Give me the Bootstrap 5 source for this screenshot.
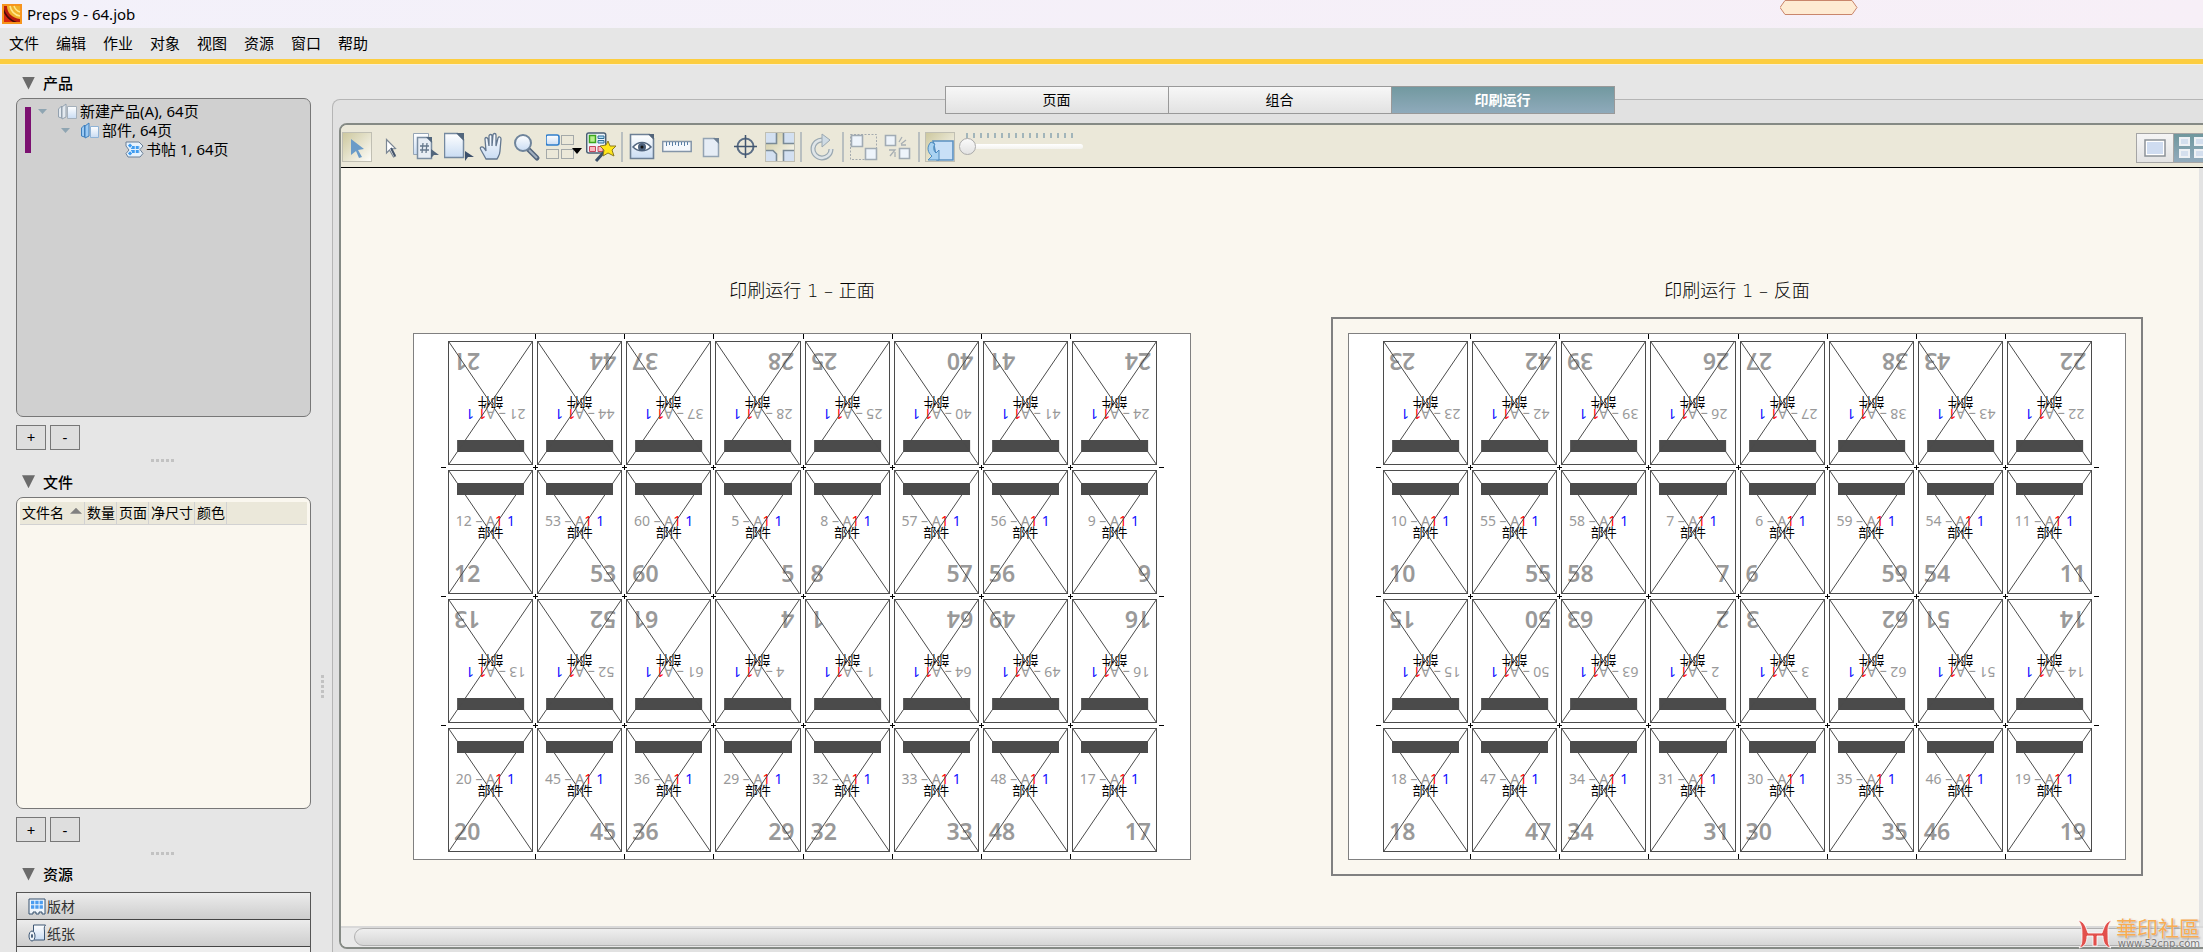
<!DOCTYPE html>
<html lang="zh-CN">
<head>
<meta charset="utf-8">
<meta name="viewport" content="width=device-width, initial-scale=1">
<title>Preps 9 - 64.job</title>
<link rel="stylesheet" href="https://cdn.jsdelivr.net/npm/bootstrap@5.3.0/dist/css/bootstrap.min.css">
<style>
body{font-family:"Noto Sans","Noto Sans CJK SC",sans-serif;font-size:15px;line-height:19px;color:#000;background:#e6e6e6}
button{font:inherit;color:inherit}
svg{display:block}
.titlebar{height:28px;padding-left:2px;background:linear-gradient(90deg,#f3f1fa,#f7eff7);gap:5px}
.title-hex{position:absolute;top:0;left:80.8%}
.menubar{height:31px;padding:0 9px;gap:17px}
.menubar a{color:#000;text-decoration:none;padding-bottom:1px}
.accent{height:6px;background:#fccd40;border-bottom:1px solid #f6efdc}
.sidebar{width:312px;padding:0 1px 0 16px}
.sec-head{height:25px;padding:0 0 5px 6px;gap:8px;font-size:15px;font-weight:500;line-height:20px;margin:0}
.sec-head.first{margin-top:8px}
.tri{width:13px;height:13px;background:#6b6b6b;clip-path:polygon(0 0,100% 0,50% 100%)}
.pane{border:1px solid #777;border-radius:7px;min-height:0;overflow:hidden}
.pane-tree{flex:322 1 0;background:#d0d0d0;padding:3px 8px}
.pane-files{flex:313 1 0;background:#faf7ef;padding:4px 3px}
.tree-mark{width:6px;height:46px;margin-top:5px;background:#7b1070}
.tree-row{height:19px;gap:2px}
.caret{width:9px;height:5px;margin-right:8px;background:#8fa5b2;clip-path:polygon(0 0,100% 0,50% 100%)}
.lv1{padding-left:7px}.lv2{padding-left:30px}.lv3{padding-left:94px}
.pm{width:30px;height:25px;padding:0;border:1px solid #777;background:#dedede;line-height:20px}
.grip{height:22px;padding-right:2px;gap:2px}
.grip i,.vgrip i{width:3px;height:3px;background:#c2c2c2}
.files{font-size:14px;line-height:20px;width:100%;background:#ebe8da;border-bottom:1px solid #d2d2d2}
.files th{font-weight:400;padding:1px 1px 1px 2px;border-right:1px solid #d2d2d2;white-space:nowrap}
.files th:last-child{width:100%;border:0}
.sort{display:inline-block;width:12px;height:6px;margin:0 1px 4px 6px;background:#808080;clip-path:polygon(50% 0,100% 100%,0 100%)}
.res{height:60px;margin-top:3px;border:1px solid #555;border-bottom:0;overflow:hidden;background:#eee}
.res button{height:27px;border:0;border-bottom:1px solid #444;background:linear-gradient(#ececec,#cdcdcd);font-size:14px;color:#333;padding:0 11px;gap:1px;text-align:left}
.vgrip{width:20px;gap:2px;padding-top:355px}
.work{margin-right:-25px;margin-top:34px;border:1px solid #b5b5b5;border-bottom:0;border-radius:8px 0 0 0;background:#e1e1e1;padding:0 6px 3px 6px}
.tabs{height:28px;margin-top:-14px;margin-bottom:9px}
.tabs button{width:224px;margin-left:-1px;border:1px solid #999;background:linear-gradient(#f7f7f7,#e2e2e2);font-size:14px;padding:0 0 2px}
.tabs button.active{background:linear-gradient(#7299a0,#8faabb);color:#fff;font-weight:700}
.stage{border:2px solid #858a85;border-radius:8px 0 0 8px;overflow:hidden;background:#faf7ef}
.tools{height:43px;padding:7px 7px 6px 1px;gap:4px;background:#ebe8d9;border-bottom:1px solid #000}
.tools .tool{width:30px;height:30px;padding:0;border:0;background:none}
.tools .tool.w36{width:36px}.tools .tool.w31{width:31px}
.tools .tool.on{background:linear-gradient(135deg,#cdc89f,#fdfcf8);border:1px solid #c0bfb3}
.rule{width:2px;height:30px;margin:0 1px;background:#b9bfc0}
.zoomer{width:124px}
.zoomer input{appearance:none;display:block;width:124px;height:17px;margin:0;background:none}
.zoomer input::-webkit-slider-runnable-track{height:5px;border-radius:3px;background:linear-gradient(#fff,#f3f2ee)}
.zoomer input::-webkit-slider-thumb{appearance:none;width:17px;height:17px;margin-top:-6px;border:1px solid #aaa;border-radius:50%;background:linear-gradient(#fafafa,#e2e2e2)}
.views{padding-top:3px}
.views button{width:38px;height:30px;padding:0;border:1px solid #a5a5a5;background:linear-gradient(#f5f5f5,#e3e3e3)}
.views button.active{background:linear-gradient(#6f979d,#92abbd);border-left:0}
.canvas{padding:111px 56px 0 55px;gap:123px}
.run{min-width:0}
.run h2{font-family:"DejaVu Sans","Noto Sans CJK SC",sans-serif;font-size:18px;line-height:24px;font-weight:300;margin:0 0 14px}
.frame{border:2px solid transparent;padding:14px 15px}
.frame.sel{border-color:#808080}
.sheet{background:#fff;border:1px solid #808080;padding:7px 33px 7px 34px;display:grid;grid-template-columns:repeat(8,1fr);gap:5px 4px}
.leaf{position:relative;height:124px;border:1px solid #4b4b4b;min-width:0}
.leaf>svg{position:absolute;inset:0;width:100%;height:100%;stroke:#4b4b4b}
.side{height:122px;overflow:hidden}
.turned{transform:rotate(180deg)}
.clampbar{position:relative;z-index:1;height:12px;margin:12px 8px 0;background:#4b4b4b}
.info{height:12px;margin-top:20px;font-size:14px;line-height:12px;color:#999}
.info span{width:46px;flex:none;text-align:right;white-space:nowrap}
.info b{font-weight:400;color:#f00}
.info em{font-style:normal;color:#11f;margin-left:4px}
.pname{height:12px;margin-top:-1px;font-size:13px;line-height:12px;text-align:center;font-family:"Noto Sans CJK SC",sans-serif}
.folio{height:24px;margin-top:23px;padding:0 5px;font-size:23px;line-height:24px;font-weight:600;color:#999}
.tick{position:absolute;background:#000}
.tick.v{width:1px;height:5px;right:-4px}
.tick.h{width:5px;height:1px;bottom:-4px}
.tick.t{top:-8px}.tick.b{bottom:-8px}
.tick.x{height:5px;bottom:-6px}
.tick.l{left:-8px}.tick.r{right:-8px}.tick.c{right:-6px}
.vbar{width:20px;background:#e3e3e3}
.hbar{height:21px;background:#e9e9e9;border-top:2px solid #d9d9d9;padding:0 30px 1px 13px}
.thumb{height:18px;border:1px solid #b0b0b0;border-radius:9px;background:linear-gradient(#efefef,#d6d6d6)}
.stamp{position:absolute;right:3px;bottom:2px;gap:3px;color:#777}
.stamp strong{font-family:"Noto Sans CJK TC",sans-serif;font-size:21px;line-height:22px;font-weight:400;color:#f8ac52;text-shadow:0 0 2px #fff,1px 1px 2px #888}
.stamp small{font-size:10px;line-height:12px;font-family:"DejaVu Sans",sans-serif;text-shadow:0 0 2px #fff}
</style>
</head>
<body class="vh-100 d-flex flex-column overflow-hidden position-relative">
<svg width="0" height="0" class="position-absolute" aria-hidden="true"><defs>
<linearGradient id="gb" x1="0" y1="0" x2="0" y2="1"><stop offset="0" stop-color="#fff"/><stop offset="1" stop-color="#c9dcf3"/></linearGradient>
</defs></svg>

<header class="titlebar d-flex align-items-center flex-shrink-0">
<svg width="20" height="20" viewBox="0 0 20 20"><rect width="20" height="20" fill="#f7941d"/><rect x="2" y="2" width="16" height="16" fill="#b81c0e"/><path d="M5 2h13v13C10 14 5 9 5 2z" fill="#f0b02a"/><path d="M8 2c1 5 5 9 10 10M12 2c1 3 3 5 6 6" stroke="#ffe88c" fill="none" stroke-width="1.500"/><path d="M2 5c2 6 7 11 13 13H2z" fill="#4a0d08"/><path d="M2 9c2 4 5 7 9 9H2z" fill="#d8290f"/></svg>
<span>Preps 9 - 64.job</span>
</header>
<svg class="title-hex" width="78" height="15" viewBox="0 0 78 15"><path d="M5 .5h67l5 7-5 7H5l-5-7z" fill="#feebd3" stroke="#c9866c"/></svg>
<nav class="menubar d-flex align-items-center flex-shrink-0">
<a href="#">文件</a><a href="#">编辑</a><a href="#">作业</a><a href="#">对象</a><a href="#">视图</a><a href="#">资源</a><a href="#">窗口</a><a href="#">帮助</a>
</nav>
<div class="accent flex-shrink-0"></div>

<div class="d-flex flex-grow-1" style="min-height:0">
<aside class="sidebar d-flex flex-column flex-shrink-0">
<h2 class="sec-head first d-flex align-items-center"><i class="tri"></i>产品</h2>
<section class="pane pane-tree d-flex align-items-start">
<div class="tree-mark"></div>
<div>
<div class="tree-row lv1 d-flex align-items-center"><i class="caret"></i>
<svg width="21" height="18" viewBox="0 0 21 18"><path d="M1.500 6l3-3v12l-3-1zM5 4l4-3v13l-4 2z" fill="#e3e9ef" stroke="#93a1af"/><path d="M10.500 3.500h9v12h-9z" fill="url(#gb)" stroke="#a5b0bb"/></svg><span>新建产品(A), 64页</span></div>
<div class="tree-row lv2 d-flex align-items-center"><i class="caret"></i>
<svg width="20" height="18" viewBox="0 0 20 18"><path d="M1.500 6l3-3v12l-3-1zM5 4l4-3v13l-4 2z" fill="#9ccaf3" stroke="#3e7fbd"/><path d="M10.500 4.500h8v11h-8z" fill="url(#gb)" stroke="#8fb3d6"/></svg><span>部件, 64页</span></div>
<div class="tree-row lv3 d-flex align-items-center">
<svg width="19" height="17" viewBox="0 0 19 17"><path d="M1 1h13l4 4-3 3.500 3 4-3 3.500H3l-2-3.500L4 9 1 5z" fill="#e6f2fd" stroke="#6b7f95"/><path d="M4 3.500l3 3h8M4 13.500l3-3h8" fill="none" stroke="#3f9cf0" stroke-width="3" stroke-dasharray="3 1"/></svg><span>书帖 1, 64页</span></div>
</div>
</section>
<div class="d-flex gap-1 mt-1 pt-1 flex-shrink-0"><button class="pm">+</button><button class="pm">-</button></div>
<div class="grip d-flex align-items-center justify-content-center flex-shrink-0"><i></i><i></i><i></i><i></i><i></i></div>
<h2 class="sec-head d-flex align-items-center flex-shrink-0"><i class="tri"></i>文件</h2>
<section class="pane pane-files">
<table class="files"><thead><tr><th>文件名<i class="sort"></i></th><th>数量</th><th>页面</th><th>净尺寸</th><th>颜色</th><th></th></tr></thead></table>
</section>
<div class="d-flex gap-1 mt-1 pt-1 flex-shrink-0"><button class="pm">+</button><button class="pm">-</button></div>
<div class="grip d-flex align-items-center justify-content-center flex-shrink-0"><i></i><i></i><i></i><i></i><i></i></div>
<h2 class="sec-head d-flex align-items-center flex-shrink-0"><i class="tri"></i>资源</h2>
<div class="res d-flex flex-column flex-shrink-0">
<button class="d-flex align-items-center flex-shrink-0"><svg width="18" height="17" viewBox="0 0 18 17"><path d="M1 1h16v15h-3v-2h-3v2H8v-2H5v2H1z" fill="#f2f7fc" stroke="#34506e"/><path d="M3 4.500h12M3 9h12" stroke="#4c9df0" stroke-width="3.500" stroke-dasharray="3.300 1"/></svg>版材</button>
<button class="d-flex align-items-center flex-shrink-0"><svg width="18" height="18" viewBox="0 0 18 18"><path d="M5.500 1h12c-2 2-1 4-1 7v8h-11z" fill="url(#gb)" stroke="#3c5674"/><ellipse cx="4" cy="12" rx="3" ry="5" fill="#eef3f8" stroke="#3c5674"/><ellipse cx="4" cy="12" rx="1" ry="2" fill="#3c5674"/></svg>纸张</button>
</div>
</aside>
<div class="vgrip d-flex flex-column align-items-center justify-content-center flex-shrink-0"><i></i><i></i><i></i><i></i><i></i></div>

<main class="work flex-grow-1 d-flex flex-column" style="min-width:0">
<div class="tabs d-flex justify-content-center flex-shrink-0"><button>页面</button><button>组合</button><button class="active">印刷运行</button></div>
<div class="stage flex-grow-1 d-flex flex-column" style="min-height:0">
<div class="tools d-flex align-items-center flex-shrink-0">
<button class="tool on" aria-label="选择"><svg width="28" height="28" viewBox="0 0 28 28"><path d="M8 6l13 10-6 1 4 7-3 1-3-7-5 4z" fill="#6a9bc8"/></svg></button>
<button class="tool" aria-label="直接选择"><svg width="30" height="30" viewBox="0 0 30 30"><path d="M10.500 7.500l9 9-4 .5 4 7-2 1-4-7-3 3z" fill="#fff" stroke="#7b8794" stroke-width="1.200"/><path d="M15 16l4 8" stroke="#44546a" stroke-width="2"/></svg></button>
<button class="tool" aria-label="编号"><svg width="30" height="30" viewBox="0 0 30 30"><path d="M3.500 1.500h15v21h-15z" fill="url(#gb)" stroke="#96a5b5"/><path d="M7.500 5.500h10l4 4v17h-14z" fill="#e7edf4" stroke="#7b8ea2" stroke-width="1.500"/><path d="M16 5h6v6z" fill="#52667c"/><path d="M13 11l-1 10M17 11l-1 10M10 14h9M10 18h9" stroke="#66788c" stroke-width="1.300"/><path d="M21 17v9l3-3 5 0z" fill="#52667c"/></svg></button>
<button class="tool" aria-label="页面选择"><svg width="30" height="30" viewBox="0 0 30 30"><path d="M.5 1.500h13l6 6v18H.500z" fill="url(#gb)" stroke="#7489a0" stroke-width="1.500"/><path d="M12 1h8v8z" fill="#52667c"/><path d="M21 19v10l3-4 6 0z" fill="#3c506b"/></svg></button>
<button class="tool" aria-label="移动"><svg width="30" height="30" viewBox="0 0 30 30"><path d="M8 27l-5-9c-2-3 1-4 3-2l2 3L7 7c0-2 2-2 3 0l1 7V4c0-2 3-2 3 0v10l1-11c0-2 3-2 3 0v11l2-8c1-2 3-1 3 1l-1 12c0 4-2 6-3 8z" fill="url(#gb)" stroke="#63778f" stroke-width="1.300"/></svg></button>
<button class="tool" aria-label="缩放"><svg width="30" height="30" viewBox="0 0 30 30"><path d="M16 17l9 9" stroke="#53657c" stroke-width="5" stroke-linecap="round"/><path d="M17 18l8 8" stroke="#a2b0c0" stroke-width="2"/><circle cx="11" cy="11" r="8" fill="url(#gb)" stroke="#6f849b" stroke-width="2"/></svg></button>
<button class="tool w36" aria-label="布局"><svg width="36" height="30" viewBox="0 0 36 30"><rect x="0" y="3" width="13" height="10" rx="2" fill="url(#gb)" stroke="#2f7dcb" stroke-width="1.600"/><path d="M15.500 3.500h12v9h-12zM.5 17.500h12v9H.500zM15.500 17.500h12v9h-12z" fill="none" stroke="#5d6b78" stroke-dasharray="1 1"/><path d="M26 16h10l-5 6z"/></svg></button>
<button class="tool" aria-label="自动"><svg width="30" height="30" viewBox="0 0 30 30"><rect x=".7" y="1" width="19" height="20" rx="2" fill="#eef4fa" stroke="#4b5f74" stroke-width="1.500"/><path d="M3.500 3.500h6v7h-6z" fill="#b6f08b" stroke="#3aa51c" stroke-width="1.500"/><path d="M12 4h6v2.500h-6zM12 8.500h6v2.500h-6z" fill="#b5dcf5" stroke="#2f6f97"/><path d="M3.500 14.500h6v5h-6zM12 14.500h5v5h-5z" fill="#f9b8c0" stroke="#c5475a"/><path d="M10 29l9-10" stroke="#3a5069" stroke-width="3"/><path d="M22 9l2 5 6 0-4 4 2 6-6-3-5 3 1-6-4-4 6-1z" fill="#ffe619" stroke="#8a7a20"/></svg></button>
<span class="rule"></span>
<button class="tool" aria-label="预览"><svg width="30" height="30" viewBox="0 0 30 30"><path d="M2.500 2.500h19l4 4v20h-23z" fill="url(#gb)" stroke="#6d8096" stroke-width="1.600"/><path d="M20 2h6v6z" fill="#53657a"/><path d="M5 15c5-6 13-6 18 0-5 5-13 5-18 0z" fill="#fff" stroke="#52667f" stroke-width="1.500"/><circle cx="14" cy="15" r="4" fill="#4c617c"/><circle cx="14" cy="15" r="1.500" fill="#111"/></svg></button>
<button class="tool" aria-label="标尺"><svg width="30" height="30" viewBox="0 0 30 30"><path d="M.7 9.500h28.500v10H.700z" fill="#f5f8fc" stroke="#8495a8" stroke-width="1.500"/><path d="M4.500 10v4M7.500 10v3M10.500 10v4M13.500 10v3M16.500 10v4M19.500 10v3M22.500 10v4M25.500 10v3" stroke="#5a7fa5"/></svg></button>
<button class="tool w31" aria-label="页面"><svg width="31" height="30" viewBox="0 0 31 30"><path d="M7.500 6.500h11l4 4v14h-15z" fill="#e6edf6" stroke="#93a3b3" stroke-width="1.500"/><path d="M17 6h6v6z" fill="#6d7f92"/></svg></button>
<button class="tool" aria-label="标记"><svg width="30" height="30" viewBox="0 0 30 30"><circle cx="14.500" cy="14.500" r="8" fill="none" stroke="#5a6d85" stroke-width="2"/><path d="M14.500 3v23M3 14.500h23" stroke="#42566f" stroke-width="1.500"/></svg></button>
<button class="tool on" aria-label="裁切标记"><svg width="28" height="28" viewBox="0 0 28 28"><path d="M0 0h10v10H0zM18 0h10v10H18zM0 18h8l3 3v7H0zM18 18h10v10H18z" fill="#d3e0f1"/><path d="M0 10.500h10.500V0M28 10.500H17.500V0M0 17.500h7l3.500 3.500v7M28 17.500H17.500V28" fill="none" stroke="#7a8a96" stroke-width="1.600"/></svg></button>
<span class="rule"></span>
<button class="tool" aria-label="旋转"><svg width="30" height="30" viewBox="0 0 30 30"><path d="M16 8a9 9 0 1 0 8 9" fill="none" stroke="#9aa8b1" stroke-width="5"/><path d="M16 8a9 9 0 1 0 8 9" fill="none" stroke="#dfe5e8" stroke-width="2.500"/><path d="M15 2l8 6-8 7z" fill="#cfdbe4" stroke="#9aa8b1"/></svg></button>
<span class="rule"></span>
<button class="tool" aria-label="组合"><svg width="30" height="30" viewBox="0 0 30 30"><path d="M1.500 2.500h26v25h-26z" fill="none" stroke="#a4aaae" stroke-dasharray="2 1.500"/><path d="M2.500 3.500h11v11h-11zM16.500 16.500h11v11h-11z" fill="#eef4fb" stroke="#a1abb4" stroke-width="1.600"/></svg></button>
<button class="tool" aria-label="取消组合"><svg width="30" height="30" viewBox="0 0 30 30"><path d="M2.500 3.500h10v10h-10zM16.500 16.500h10v10h-10z" fill="#eef4fb" stroke="#a1abb4" stroke-width="1.600"/><path d="M16 10l3-5M18 12l5-4M18 13h5M6 18h6l-5 6M12 20v5" stroke="#a8afb3" fill="none" stroke-width="1.300"/></svg></button>
<span class="rule"></span>
<button class="tool on" aria-label="翻转"><svg width="28" height="28" viewBox="0 0 28 28"><path d="M7 8h20v19H11z" fill="#c9e0f7" stroke="#5b90c1" stroke-width="1.600"/><path d="M5 9c-5 5-3 11 1 14l-4 4h11V17l-3 3c-3-3-3-6-1-9z" fill="#a9d2f1" stroke="#4c8cc0"/></svg></button>
<div class="zoomer align-self-start"><svg width="124" height="6" viewBox="0 0 124 6"><path id="ticks" stroke="#8aa5af" stroke-width="1.500"/></svg><input type="range" min="0" max="15" value="0" aria-label="缩放比例"></div>
<div class="views d-flex ms-auto"><button aria-label="单页视图"><svg class="m-auto" width="22" height="18" viewBox="0 0 22 18"><path d="M1 1h20v16H1z" fill="#fff" stroke="#8c9298" stroke-width="1.500"/><path d="M3 3h16v12H3z" fill="#cfdcf0"/></svg></button><button class="active" aria-label="多页视图"><svg class="m-auto" width="28" height="22" viewBox="0 0 28 22"><path d="M1 1h9v7H1zM16 1h9v7h-9zM1 13h9v7H1zM16 13h9v7h-9z" fill="#d4dfee" stroke="#eef1f5" stroke-width="2"/></svg></button></div>
</div>
<div class="d-flex flex-grow-1" style="min-height:0">
<div class="canvas d-flex flex-grow-1 align-items-start overflow-hidden">
<section class="run flex-fill w-50 text-center"><h2>印刷运行 1 – 正面</h2><div class="frame"><div class="sheet text-start" data-pages="21 44 37 28 25 40 41 24 12 53 60 5 8 57 56 9 13 52 61 4 1 64 49 16 20 45 36 29 32 33 48 17"></div></div></section>
<section class="run flex-fill w-50 text-center"><h2>印刷运行 1 – 反面</h2><div class="frame sel"><div class="sheet text-start" data-pages="23 42 39 26 27 38 43 22 10 55 58 7 6 59 54 11 15 50 63 2 3 62 51 14 18 47 34 31 30 35 46 19"></div></div></section>
</div>
<div class="vbar flex-shrink-0"></div>
</div>
<div class="hbar flex-shrink-0"><div class="thumb"></div></div>
</div>
</main>
</div>

<div class="stamp d-flex align-items-end">
<svg width="36" height="32" viewBox="0 0 36 32"><path d="M1 2c7 2 8 8 10 13h14c2-5 3-11 10-13-5 5-4 10-4 16 0 5 0 9 3 12-6-1-8-6-8-12h-6v10h-4V18h-6c0 6-2 11-8 12 3-3 3-7 3-12C5 11 5 7 1 2z" fill="#e2504c" stroke="#fff" stroke-width=".8"/></svg>
<div class="d-flex flex-column align-items-end"><strong>華印社區</strong><small>www.52cnp.com</small></div>
</div>

<script src="https://cdn.jsdelivr.net/npm/bootstrap@5.3.0/dist/js/bootstrap.bundle.min.js"></script>
<script>
// Fill each press sheet: four rows of eight leaves, odd rows head-down.
const COLS = 8, ROWS = 4;
document.querySelectorAll('.sheet').forEach(sheet => {
  sheet.innerHTML = sheet.dataset.pages.split(' ').map((page, i) => {
    const col = i % COLS, row = Math.floor(i / COLS), turned = row % 2 === 0;
    const alignEnd = (col % 2 === 1) !== turned;
    let marks = '';
    if (col < COLS - 1) {
      if (row === 0) marks += '<i class="tick v t"></i>';
      marks += row === ROWS - 1 ? '<i class="tick v b"></i>' : '<i class="tick v x"></i><i class="tick h c"></i>';
    }
    if (row < ROWS - 1) {
      if (col === 0) marks += '<i class="tick h l"></i>';
      if (col === COLS - 1) marks += '<i class="tick h r"></i>';
    }
    return `<div class="leaf"><div class="side ${turned ? 'turned' : ''}">
      <div class="clampbar"></div>
      <div class="info d-flex"><span>${page} – A</span><b>1</b><em>1</em></div>
      <div class="pname">部件</div>
      <div class="folio ${alignEnd ? 'text-end' : ''}">${page}</div></div>
      <svg viewBox="0 0 100 100" preserveAspectRatio="none"><path d="M0 0L100 100M100 0L0 100" vector-effect="non-scaling-stroke"/></svg>${marks}</div>`;
  }).join('');
});
// Scale marks above the zoom slider
document.getElementById('ticks').setAttribute('d', Array.from({length: 16}, (_, i) => `M${8 + i * 7} 1v5`).join(''));
</script>
</body>
</html>
